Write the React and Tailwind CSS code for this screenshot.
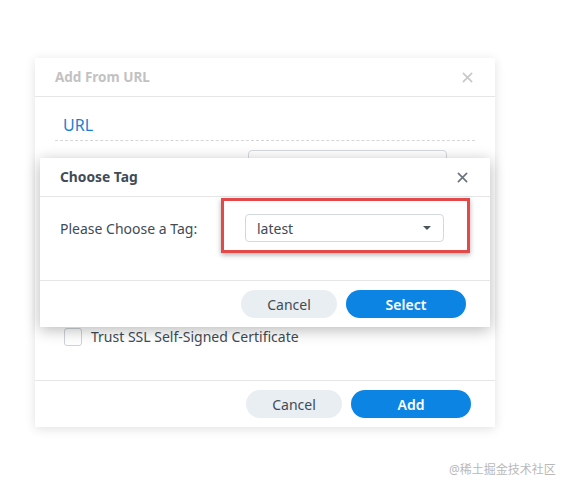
import React from 'react';

function CloseIcon({ className }) {
  return (
    <svg viewBox="0 0 12 12" className={className} fill="none" stroke="currentColor" strokeWidth="1.8" strokeLinecap="round">
      <path d="M1.5 1.5 L10.5 10.5 M10.5 1.5 L1.5 10.5" />
    </svg>
  );
}

function Btn({ primary, children, className = '' }) {
  return (
    <button
      className={
        'h-[28px] rounded-full text-[14px] ' +
        (primary
          ? 'bg-[#0b84e4] text-white font-semibold '
          : 'bg-[#e9eef3] text-[#414b55] ') +
        className
      }
    >
      {children}
    </button>
  );
}

export default function App() {
  return (
    <div
      className="relative min-h-[492px] w-[573px] bg-white pt-[58px] pl-[35px]"
      style={{ fontFamily: '"Noto Sans", "Noto Sans CJK SC", sans-serif' }}
    >
      {/* outer dialog: Add From URL */}
      <div className="relative w-[460px] h-[369px] bg-white shadow-[0_2px_10px_rgba(0,0,0,0.12)] flex flex-col text-[#414b55]">
        <div className="h-[39px] flex items-center justify-between px-[20px] border-b border-[#e6e6e6]">
          <span className="text-[13.5px] font-bold text-[#c2c2c2]">Add From URL</span>
          <CloseIcon className="w-[11px] h-[11px] text-[#c8c8c8] mr-[2px]" />
        </div>
        <div className="flex-1 px-[20px]">
          <div className="h-[44px] flex items-end border-b border-dashed border-[#d6d6d6]">
            <span className="ml-[8px] mb-[3px] text-[16px] text-[#1a7fd2]">URL</span>
          </div>
          <div className="mt-[9px] flex justify-end pr-[28px]">
            <div className="w-[199px] h-[28px] border border-[#d4d9de] rounded-[4px]" />
          </div>
          <div className="h-[148px]" />
          <div className="flex items-center ml-[9px] gap-[9px]">
            <div className="w-[18px] h-[18px] border border-[#ccd2d8] rounded-[3px] bg-white" />
            <span className="text-[14px] text-[#414b55]">Trust SSL Self-Signed Certificate</span>
          </div>
        </div>
        <div className="h-[47px] border-t border-[#e6e6e6] flex items-center justify-end gap-[9px] pr-[24px]">
          <Btn className="w-[96px]">Cancel</Btn>
          <Btn primary className="w-[120px]">Add</Btn>
        </div>

        {/* overlay dialog: Choose Tag */}
        <div className="absolute left-[5px] top-[100px] w-[450px] h-[169px] bg-white shadow-[0_3px_14px_rgba(0,0,0,0.28)] flex flex-col">
          <div className="h-[39px] flex items-center justify-between px-[20px] pt-[1px] border-b border-[#e6e6e6]">
            <span className="text-[13.8px] font-bold text-[#414b55]">Choose Tag</span>
            <CloseIcon className="w-[11px] h-[11px] text-[#6b737b] mr-[2px]" />
          </div>
          <div className="relative flex-1 flex items-start px-[20px] pt-[17px]">
            <span className="w-[185px] h-[28px] flex items-center text-[14px] text-[#414b55]">Please Choose a Tag:</span>
            <div className="w-[199px] h-[28px] border border-[#d4d9de] rounded-[4px] flex items-center justify-between pl-[11px] pr-[12px]">
              <span className="text-[14px] text-[#414b55]">latest</span>
              <svg viewBox="0 0 8 4" className="w-[8px] h-[4px]">
                <path d="M0 0 L8 0 L4 4 Z" fill="#4b535b" />
              </svg>
            </div>
            <div className="absolute left-[181px] top-[1px] w-[249px] h-[55px] border-[3px] border-[#e34949] shadow-[0_2px_5px_rgba(0,0,0,0.3)]" />
          </div>
          <div className="h-[47px] border-t border-[#e6e6e6] flex items-center justify-end gap-[9px] pr-[24px]">
            <Btn className="w-[96px]">Cancel</Btn>
            <Btn primary className="w-[120px]">Select</Btn>
          </div>
        </div>
      </div>

      <div className="absolute left-[449px] top-[461px] text-[12px] text-[#b9b9b9]">@稀土掘金技术社区</div>
    </div>
  );
}
